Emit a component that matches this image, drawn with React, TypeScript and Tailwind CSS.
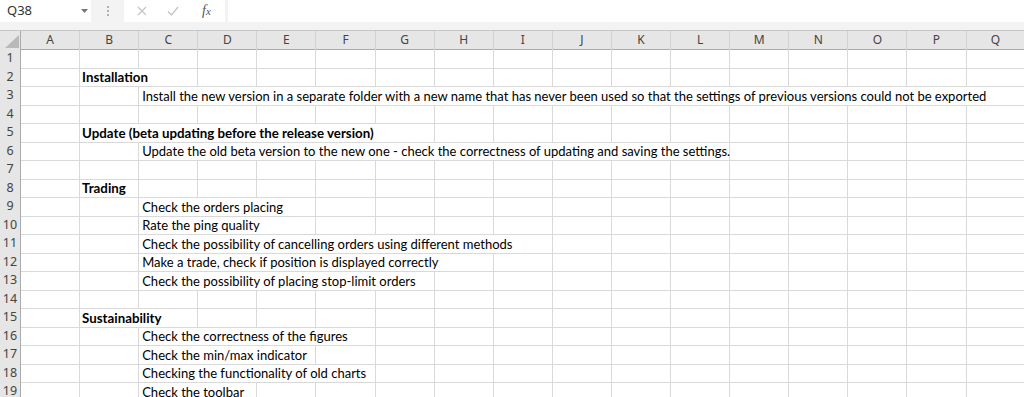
import React from "react";

const COLS = ["A", "B", "C", "D", "E", "F", "G", "H", "I", "J", "K", "L", "M", "N", "O", "P", "Q"];

type Row = { start?: number; span?: number; text?: string; bold?: boolean };

// start: 1 = column B, 2 = column C; span = columns the text runs across
const rows: Row[] = [
  {},
  { start: 1, span: 2, text: "Installation", bold: true },
  {
    start: 2,
    span: 15,
    text: "Install the new version in a separate folder with a new name that has never been used so that the settings of previous versions could not be exported",
  },
  {},
  { start: 1, span: 6, text: "Update (beta updating before the release version)", bold: true },
  {
    start: 2,
    span: 10,
    text: "Update the old beta version to the new one - check the correctness of updating and saving the settings.",
  },
  {},
  { start: 1, span: 1, text: "Trading", bold: true },
  { start: 2, span: 3, text: "Check the orders placing" },
  { start: 2, span: 3, text: "Rate the ping quality" },
  { start: 2, span: 7, text: "Check the possibility of cancelling orders using different methods" },
  { start: 2, span: 6, text: "Make a trade, check if position is displayed correctly" },
  { start: 2, span: 5, text: "Check the possibility of placing stop-limit orders" },
  {},
  { start: 1, span: 2, text: "Sustainability", bold: true },
  { start: 2, span: 4, text: "Check the correctness of the figures" },
  { start: 2, span: 3, text: "Check the min/max indicator" },
  { start: 2, span: 4, text: "Checking the functionality of old charts" },
  { start: 2, span: 2, text: "Check the toolbar" },
];

const spanClass: Record<number, string> = {
  1: "col-span-1",
  2: "col-span-2",
  3: "col-span-3",
  4: "col-span-4",
  5: "col-span-5",
  6: "col-span-6",
  7: "col-span-7",
  8: "col-span-8",
  9: "col-span-9",
  10: "col-span-10",
  11: "col-span-11",
  12: "col-span-12",
  13: "col-span-13",
  14: "col-span-14",
  15: "col-span-15",
};

const gridCols = "grid grid-cols-[21px_repeat(17,59.1px)]";
const uiFont = "font-['Noto_Sans','Open_Sans',sans-serif]";
const cellFont = "font-['Lato','Open_Sans',sans-serif]";

const FormulaBar: React.FC = () => (
  <div className="flex h-[22px] bg-[#f3f3f3]">
    <div className={`flex w-[91px] items-center justify-between bg-white pl-[7px] pr-[3px] text-[13px] text-[#333] ${uiFont}`}>
      <span>Q38</span>
      <svg width="7" height="4" viewBox="0 0 7 4">
        <path d="M0 0h7L3.5 4z" fill="#777" />
      </svg>
    </div>
    <div className="flex w-[33px] items-center justify-center">
      <div className="flex flex-col gap-[2px]">
        <span className="h-[2px] w-[2px] bg-[#b0b0b0]" />
        <span className="h-[2px] w-[2px] bg-[#b0b0b0]" />
        <span className="h-[2px] w-[2px] bg-[#b0b0b0]" />
      </div>
    </div>
    <div className="flex w-[101px] items-center bg-white">
      <svg className="ml-[13px]" width="10" height="10" viewBox="0 0 10 10">
        <path d="M1 1l8 8M9 1l-8 8" stroke="#c4c4c4" strokeWidth="1.2" />
      </svg>
      <svg className="ml-[20px]" width="12" height="10" viewBox="0 0 12 10">
        <path d="M1 5.5l3.5 3.5L11 1" stroke="#c4c4c4" strokeWidth="1.3" fill="none" />
      </svg>
      <span className="ml-[23px] font-['Liberation_Serif',serif] text-[14px] italic leading-none text-[#555]">
        f<span className="text-[11px]">x</span>
      </span>
    </div>
    <div className="ml-[3px] flex-1 bg-white" />
  </div>
);

const Header: React.FC = () => (
  <div className={`${gridCols} h-[19px] border-t border-[#c6c6c6] bg-[#e6e6e6]`}>
    <div className="flex items-end justify-end border-r border-b border-[#ababab] pb-[1px] pr-[1px]">
      <svg width="14" height="13" viewBox="0 0 14 13">
        <path d="M14 0V13H0z" fill="#b9b9b9" />
      </svg>
    </div>
    {COLS.map((c) => (
      <div
        key={c}
        className={`flex items-center justify-center border-r border-b border-r-[#d2d2d2] border-b-[#ababab] text-[12px] text-[#444] ${uiFont}`}
      >
        {c}
      </div>
    ))}
  </div>
);

const SheetRow: React.FC<{ n: number; row: Row }> = ({ n, row }) => {
  const cells: React.ReactNode[] = [];
  let i = 0;
  while (i < COLS.length) {
    if (row.text && row.start === i) {
      const span = row.span ?? 1;
      cells.push(
        <div
          key={i}
          className={`${spanClass[span]} flex items-end whitespace-nowrap border-r border-b border-[#d9d9d9] pb-[1px] leading-[16px] text-black ${cellFont} ${
            row.bold ? "pl-[2px] text-[13.3px] font-bold" : "pl-[3px] text-[13px]"
          }`}
        >
          {row.text}
        </div>
      );
      i += span;
    } else {
      cells.push(<div key={i} className="border-r border-b border-[#d9d9d9]" />);
      i += 1;
    }
  }
  return (
    <div className={`${gridCols} h-[18.5px]`}>
      <div
        className={`flex items-center justify-center border-r border-b border-r-[#ababab] border-b-[#d2d2d2] bg-[#e6e6e6] text-[12.5px] text-[#444] ${uiFont}`}
      >
        {n}
      </div>
      {cells}
    </div>
  );
};

export default function App() {
  return (
    <div className="h-[397px] w-[1024px] overflow-hidden bg-white">
      <FormulaBar />
      <div className="h-[8px] bg-[#f3f3f3]" />
      <Header />
      {rows.map((r, idx) => (
        <SheetRow key={idx} n={idx + 1} row={r} />
      ))}
    </div>
  );
}
